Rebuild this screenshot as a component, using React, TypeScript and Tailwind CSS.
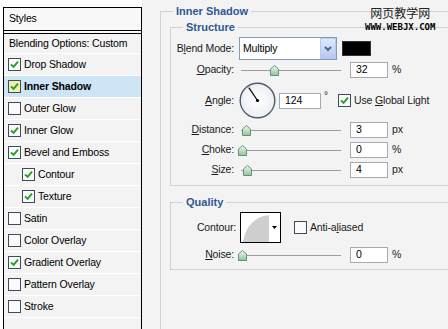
const font = "font-['Liberation_Sans',Arial,sans-serif]";
const txt = "text-[10.5px] tracking-[-0.15px]";

type StyleItem = { name: string; on?: boolean; active?: boolean; sub?: boolean };

const styleItems: StyleItem[] = [
  { name: "Drop Shadow", on: true },
  { name: "Inner Shadow", on: true, active: true },
  { name: "Outer Glow" },
  { name: "Inner Glow", on: true },
  { name: "Bevel and Emboss", on: true },
  { name: "Contour", on: true, sub: true },
  { name: "Texture", on: true, sub: true },
  { name: "Satin" },
  { name: "Color Overlay" },
  { name: "Gradient Overlay", on: true },
  { name: "Pattern Overlay" },
  { name: "Stroke" },
];

function Check({ on, hot }: { on?: boolean; hot?: boolean }) {
  return (
    <span
      className={`flex h-[13px] w-[13px] shrink-0 items-center justify-center border border-[#3f4a5e] ${
        hot ? "bg-[#f3efb0]" : "bg-[#fafafa]"
      }`}
    >
      {on ? (
        <svg width="9" height="9" viewBox="0 0 9 9">
          <path d="M1 4.3 L3.6 6.9 L8 1.6" fill="none" stroke="#23a023" strokeWidth="1.9" />
        </svg>
      ) : null}
    </span>
  );
}

function Thumb() {
  return (
    <svg width="9" height="11" viewBox="0 0 9 11">
      <defs>
        <linearGradient id="tg" x1="0" y1="0" x2="0" y2="1">
          <stop offset="0" stopColor="#f2f8f2" />
          <stop offset="1" stopColor="#8fc49a" />
        </linearGradient>
      </defs>
      <path d="M4.5 0.5 L8.5 4 L8.5 10.5 L0.5 10.5 L0.5 4 Z" fill="url(#tg)" stroke="#6b8f74" />
    </svg>
  );
}

function Slider({ pos }: { pos: number }) {
  return (
    <div className="relative flex h-[16px] w-[103px] shrink-0 items-center">
      <div className="ml-[3px] h-px w-[100px] bg-[#9c9c9c]" />
      <div className="absolute top-[3px]" style={{ left: pos }}>
        <Thumb />
      </div>
    </div>
  );
}

function Field({ value, w = "w-[38px]" }: { value: string; w?: string }) {
  return (
    <div className={`flex h-[16px] ${w} shrink-0 items-center border border-[#a3aab6] bg-white pl-[5px] ${txt} text-black`}>
      {value}
    </div>
  );
}

function Label({ children, w = "w-[63px]" }: { children: React.ReactNode; w?: string }) {
  return <div className={`${w} shrink-0 text-right ${txt} text-[#1a1a1a]`}>{children}</div>;
}

function SliderRow({ label, pos, value, unit }: { label: React.ReactNode; pos: number; value: string; unit: string }) {
  return (
    <div className="flex h-[16px] items-center">
      <Label>{label}</Label>
      <div className="ml-[4px]">
        <Slider pos={pos} />
      </div>
      <div className="ml-[9px]">
        <Field value={value} />
      </div>
      <span className={`ml-[4px] ${txt} text-[#1a1a1a]`}>{unit}</span>
    </div>
  );
}

function Dial() {
  const a = (124 * Math.PI) / 180;
  const x = 18.5 + 15.5 * Math.cos(a);
  const y = 18.5 - 15.5 * Math.sin(a);
  return (
    <svg width="37" height="37" viewBox="0 0 37 37">
      <defs>
        <radialGradient id="dg" cx="0.5" cy="0.5" r="0.5">
          <stop offset="0" stopColor="#ffffff" />
          <stop offset="1" stopColor="#eceef2" />
        </radialGradient>
      </defs>
      <circle cx="18.5" cy="18.5" r="17.3" fill="url(#dg)" stroke="#4f5b73" strokeWidth="1.4" />
      <line x1="18.5" y1="18.5" x2={x} y2={y} stroke="#000" strokeWidth="1.2" />
      <circle cx="18.5" cy="18.5" r="1.6" fill="#000" />
    </svg>
  );
}

function ContourPicker() {
  return (
    <div className="flex h-[31px] w-[41px] shrink-0 border border-black bg-white">
      <svg width="28" height="29" viewBox="0 0 28 29">
        <path d="M2 29 Q6 5 28 2 L28 29 Z" fill="#cfcfcf" />
      </svg>
      <div className="flex flex-1 items-center justify-center">
        <svg width="5" height="3" viewBox="0 0 5 3">
          <path d="M0 0 L5 0 L2.5 3 Z" fill="#000" />
        </svg>
      </div>
    </div>
  );
}

export default function App() {
  return (
    <div className={`relative flex h-[329px] w-[448px] overflow-hidden bg-[#f3f3f3] ${font}`}>
      {/* styles list */}
      <div className="flex shrink-0 flex-col bg-white pl-[3px] pt-[7px]">
        <div className="flex w-[139px] flex-1 flex-col border border-b-0 border-black bg-[#f3f3f3]">
          <div className={`flex h-[23px] items-center border-b border-black bg-[#f8f8f8] pl-[5px] ${txt} text-black`}>
            Styles
          </div>
          <div className="h-[2px] bg-[#f8f8f8]" />
          <div className={`flex h-[21px] items-center border-b border-t border-b-white border-t-black pl-[5px] ${txt} text-black`}>
            Blending Options: Custom
          </div>
          {styleItems.map((s) => (
            <div
              key={s.name}
              className={`flex h-[22px] items-center gap-[3px] border-b border-white ${s.sub ? "pl-[18px]" : "pl-[4px]"} ${
                s.active ? "bg-[#cde5f5] font-bold" : ""
              } ${txt} text-black`}
            >
              <Check on={s.on} hot={s.active} />
              <span>{s.name}</span>
            </div>
          ))}
        </div>
      </div>

      {/* settings */}
      <div className="ml-[18px] flex-1">
        <fieldset className="mt-[5px] h-[400px] w-[320px] border border-[#d2d2d2]">
          <legend className="ml-[12px] px-[3px] text-[11px] font-bold leading-[13px] text-[#2f5893]">Inner Shadow</legend>

          <fieldset className="ml-[9px] mt-[3px] w-[300px] border border-[#d2d2d2] pb-[7px] pt-[3px]">
            <legend className="ml-[12px] px-[3px] text-[11px] font-bold leading-[13px] text-[#2f5893]">Structure</legend>

            <div className="flex h-[23px] items-center">
              <Label>
                B<u>l</u>end Mode:
              </Label>
              <div className="ml-[5px] flex h-[23px] w-[98px] shrink-0 border border-[#7f9db9] bg-white">
                <span className={`flex flex-1 items-center pl-[3px] ${txt} text-black`}>Multiply</span>
                <span className="flex w-[16px] items-center justify-center border border-[#b9c9ea] bg-gradient-to-b from-[#dfe8fb] to-[#b7c8ef]">
                  <svg width="8" height="6" viewBox="0 0 8 6">
                    <path d="M1 1 L4 4 L7 1" fill="none" stroke="#4d6185" strokeWidth="1.8" />
                  </svg>
                </span>
              </div>
              <div className="ml-[5px] h-[15px] w-[29px] border border-[#333] bg-black" />
            </div>

            <div className="mt-[2px]">
              <SliderRow label={<><u>O</u>pacity:</>} pos={32} value="32" unit="%" />
            </div>

            <div className="mt-[4px] flex h-[37px] items-center">
              <Label>
                <u>A</u>ngle:
              </Label>
              <div className="ml-[5px]">
                <Dial />
              </div>
              <div className="ml-[3px]">
                <Field value="124" w="w-[42px]" />
              </div>
              <span className="ml-[3px] w-[14px] self-start pt-[9px] text-[10px] leading-none text-[#1a1a1a]">°</span>
              <Check on />
              <span className={`ml-[3px] ${txt} text-[#1a1a1a]`}>
                Use <u>G</u>lobal Light
              </span>
            </div>

            <div className="mt-[3px]">
              <SliderRow label={<><u>D</u>istance:</>} pos={4} value="3" unit="px" />
            </div>
            <div className="mt-[4px]">
              <SliderRow label={<><u>C</u>hoke:</>} pos={0} value="0" unit="%" />
            </div>
            <div className="mt-[4px]">
              <SliderRow label={<><u>S</u>ize:</>} pos={5} value="4" unit="px" />
            </div>
          </fieldset>

          <fieldset className="ml-[9px] mt-[10px] w-[300px] border border-[#d2d2d2] pb-[6px]">
            <legend className="ml-[12px] px-[3px] text-[11px] font-bold leading-[13px] text-[#2f5893]">Quality</legend>
            <div className="mt-[3px] flex h-[31px] items-center">
              <Label w="w-[65px]">Contour:</Label>
              <div className="ml-[4px]">
                <ContourPicker />
              </div>
              <div className="ml-[13px]">
                <Check />
              </div>
              <span className={`ml-[3px] ${txt} text-[#1a1a1a]`}>
                Anti-a<u>l</u>iased
              </span>
            </div>
            <div className="mt-[4px]">
              <SliderRow label={<><u>N</u>oise:</>} pos={0} value="0" unit="%" />
            </div>
          </fieldset>
        </fieldset>
      </div>

      {/* watermark */}
      <div className="absolute left-[365px] top-[5px] flex flex-col items-center">
        <span className="font-['Noto_Sans_CJK_SC',sans-serif] text-[12px] leading-[16px] text-[#222]">网页教学网</span>
        <span className="mt-[2px] font-['DejaVu_Sans_Mono',monospace] text-[9px] font-bold leading-[9px] text-black">
          WWW.WEBJX.COM
        </span>
      </div>
    </div>
  );
}
